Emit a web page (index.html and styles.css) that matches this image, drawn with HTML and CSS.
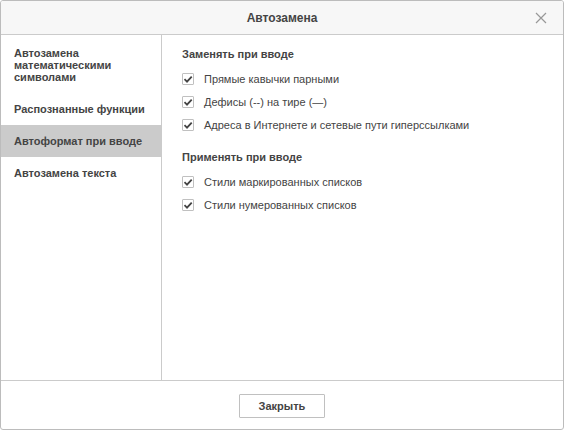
FILE: index.html
```html
<!DOCTYPE html>
<html lang="ru">
<head>
<meta charset="utf-8">
<title>Автозамена</title>
<link rel="stylesheet" href="styles.css">
</head>
<body>
<div class="dialog">
  <div class="header">
    <span class="title">Автозамена</span>
    <span class="close">
      <svg width="12" height="12" viewBox="0 0 12 12"><path d="M1 1L11 11M11 1L1 11" stroke="#989898" stroke-width="1.2" fill="none"/></svg>
    </span>
  </div>
  <div class="body">
    <div class="side">
      <div class="item">Автозамена математическими символами</div>
      <div class="item">Распознанные функции</div>
      <div class="item active">Автоформат при вводе</div>
      <div class="item">Автозамена текста</div>
    </div>
    <div class="content">
      <div class="group-title">Заменять при вводе</div>
      <div class="row"><span class="cb"><svg width="10" height="10" viewBox="0 0 10 10"><path d="M1.5 5.2L4 7.6L8.7 2.6" stroke="#444" stroke-width="1.8" fill="none"/></svg></span>Прямые кавычки парными</div>
      <div class="row"><span class="cb"><svg width="10" height="10" viewBox="0 0 10 10"><path d="M1.5 5.2L4 7.6L8.7 2.6" stroke="#444" stroke-width="1.8" fill="none"/></svg></span>Дефисы (--) на тире (—)</div>
      <div class="row"><span class="cb"><svg width="10" height="10" viewBox="0 0 10 10"><path d="M1.5 5.2L4 7.6L8.7 2.6" stroke="#444" stroke-width="1.8" fill="none"/></svg></span>Адреса в Интернете и сетевые пути гиперссылками</div>
      <div class="group-title second">Применять при вводе</div>
      <div class="row"><span class="cb"><svg width="10" height="10" viewBox="0 0 10 10"><path d="M1.5 5.2L4 7.6L8.7 2.6" stroke="#444" stroke-width="1.8" fill="none"/></svg></span>Стили маркированных списков</div>
      <div class="row"><span class="cb"><svg width="10" height="10" viewBox="0 0 10 10"><path d="M1.5 5.2L4 7.6L8.7 2.6" stroke="#444" stroke-width="1.8" fill="none"/></svg></span>Стили нумерованных списков</div>
    </div>
  </div>
  <div class="footer">
    <button class="btn">Закрыть</button>
  </div>
</div>
</body>
</html>
```
FILE: styles.css
```css
* { box-sizing: border-box; }
html, body { margin: 0; padding: 0; background: #fff; }
body {
  font-family: Arial, "Liberation Sans", sans-serif;
  font-size: 11px;
  color: #444;
}
.dialog {
  width: 564px;
  height: 430px;
  border: 1px solid #bcbcbc;
  border-radius: 3px;
  display: flex;
  flex-direction: column;
  overflow: hidden;
  background: #fff;
}
.header {
  height: 34px;
  flex: none;
  background: #f7f7f7;
  border-bottom: 1px solid #cbcbcb;
  display: flex;
  align-items: center;
  justify-content: center;
  position: relative;
}
.title {
  font-size: 12px;
  font-weight: bold;
  color: #444;
}
.close {
  position: absolute;
  right: 16px;
  top: 11px;
  width: 12px;
  height: 12px;
  display: flex;
}
.body {
  flex: 1;
  display: flex;
  min-height: 0;
}
.side {
  width: 161px;
  flex: none;
  border-right: 1px solid #cbcbcb;
  padding-top: 2px;
}
.item {
  padding: 10px 12px 10px 13px;
  line-height: 12px;
  font-weight: bold;
  color: #444;
}
.item.active {
  background: #cbcbcb;
}
.content {
  flex: 1;
  padding: 12px 0 0 20px;
}
.group-title {
  font-weight: bold;
  line-height: 14px;
  margin-bottom: 6px;
}
.group-title.second {
  margin-top: 14px;
}
.row {
  display: flex;
  align-items: center;
  height: 23px;
}
.cb {
  width: 12px;
  height: 12px;
  border: 1px solid #c0c0c0;
  border-radius: 1px;
  margin-right: 10px;
  display: flex;
  align-items: center;
  justify-content: center;
  background: #fff;
}
.cb svg { display: block; }
.footer {
  height: 49px;
  flex: none;
  border-top: 1px solid #cbcbcb;
  display: flex;
  align-items: center;
  justify-content: center;
}
.btn {
  width: 86px;
  height: 24px;
  border: 1px solid #c0c0c0;
  border-radius: 1px;
  background: #fff;
  font-family: Arial, "Liberation Sans", sans-serif;
  font-size: 11px;
  font-weight: bold;
  color: #444;
  padding: 0;
  margin-top: 1px;
}
```
